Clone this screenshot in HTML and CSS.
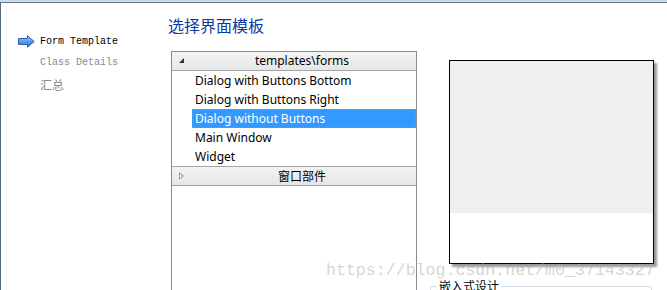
FILE: index.html
```html
<!DOCTYPE html>
<html lang="zh-CN">
<head>
    <meta charset="UTF-8">
    <title>新建窗体 - 选择界面模板</title>
    <link rel="stylesheet" href="styles.css">
</head>
<body>

    <div class="frame">
        <div class="frame-inner">

            <!-- Wizard steps -->
            <ul class="steps">
                <li class="step current">
                    <span class="step-mark">
                        <svg width="17" height="13" viewBox="0 0 17 13">
                            <defs>
                                <linearGradient id="arrowFill" x1="0" y1="0" x2="0" y2="1">
                                    <stop offset="0" stop-color="#a9d0ff"/>
                                    <stop offset="0.5" stop-color="#5b9bea"/>
                                    <stop offset="1" stop-color="#2f6fc9"/>
                                </linearGradient>
                            </defs>
                            <path d="M0.5 3.5 H9.5 V0.8 L16.2 6.5 L9.5 12.2 V9.5 H0.5 Z" fill="url(#arrowFill)" stroke="#2b5fae" stroke-width="1"/>
                        </svg>
                    </span>
                    Form Template
                </li>
                <li class="step"><span class="step-mark"></span>Class Details</li>
                <li class="step cjk"><span class="step-mark"></span>汇总</li>
            </ul>

            <!-- Page -->
            <div class="page">
                <h1 class="page-title">选择界面模板</h1>

                <div class="page-body">
                    <div class="tree">
                        <div class="tree-header">
                            <span class="tree-toggle open"></span>
                            templates\forms
                        </div>
                        <div class="tree-item">Dialog with Buttons Bottom</div>
                        <div class="tree-item">Dialog with Buttons Right</div>
                        <div class="tree-item selected">Dialog without Buttons</div>
                        <div class="tree-item">Main Window</div>
                        <div class="tree-item">Widget</div>
                        <div class="tree-header cjk">
                            <span class="tree-toggle closed"></span>
                            窗口部件
                        </div>
                    </div>

                    <div class="side">
                        <div class="preview">
                            <div class="preview-form"></div>
                        </div>
                        <fieldset class="group">
                            <legend>嵌入式设计</legend>
                        </fieldset>
                    </div>
                </div>
            </div>

        </div>
    </div>

    <div class="watermark">https://blog.csdn.net/m0_37143327</div>

</body>
</html>
```

FILE: styles.css
```css
/* Base */
body, html {
    margin: 0;
    padding: 0;
    width: 667px;
    height: 290px;
    overflow: hidden;
    background: #ffffff;
    font-family: 'Noto Sans', 'Noto Sans CJK SC', sans-serif;
    color: #000;
    position: relative;
}

/* Window frame */
.frame {
    height: 100%;
    border-top: 2px solid #c9dcf0;
    box-sizing: border-box;
}

.frame-inner {
    display: flex;
    height: 100%;
    border-top: 1px solid #6f7884;
    border-left: 1px solid #56687b;
    box-sizing: border-box;
}

/* Wizard steps */
.steps {
    list-style: none;
    margin: 0;
    padding: 31px 0 0 17px;
    width: 133px;
    flex-shrink: 0;
}

.step {
    display: flex;
    align-items: center;
    height: 18px;
    font-family: 'Liberation Mono', 'DejaVu Sans Mono', monospace;
    font-size: 10px;
    color: #8a8a8a;
    white-space: nowrap;
}

.step.current {
    height: 15px;
    margin-bottom: 4px;
    color: #000;
}

.step.cjk {
    font-family: 'Noto Sans CJK SC', sans-serif;
    font-size: 12px;
    height: 26px;
}

.step-mark {
    display: flex;
    width: 17px;
    margin-right: 5px;
}

/* Page */
.page {
    flex: 1;
    padding: 12px 0 0 17px;
}

.page-title {
    margin: 0;
    font-family: 'Noto Sans CJK SC', sans-serif;
    font-weight: normal;
    font-size: 16px;
    line-height: 20px;
    color: #0a3aa0;
}

.page-body {
    display: flex;
    margin-top: 16px;
    margin-left: 3px;
}

/* Template tree */
.tree {
    width: 246px;
    height: 239px;
    border: 1px solid #8b8b96;
    border-bottom: none;
    box-sizing: border-box;
    font-size: 12px;
    flex-shrink: 0;
}

.tree-header {
    position: relative;
    height: 18px;
    line-height: 18px;
    padding-left: 16px;
    text-align: center;
    background: linear-gradient(#f4f4f4, #e6e6e6);
    border-bottom: 1px solid #a3a3a8;
}

.tree-header.cjk {
    border-top: 1px solid #a3a3a8;
    font-family: 'Noto Sans CJK SC', sans-serif;
    font-size: 12px;
}

.tree-toggle {
    position: absolute;
    left: 7px;
    top: 6px;
    width: 0;
    height: 0;
}

.tree-toggle.open {
    border-left: 5px solid transparent;
    border-bottom: 5px solid #333;
}

.tree-toggle.closed {
    top: 5px;
    width: 5px;
    height: 8px;
}

.tree-toggle.closed::before {
    content: "";
    position: absolute;
    left: 0;
    top: 0;
    border-top: 4px solid transparent;
    border-bottom: 4px solid transparent;
    border-left: 5px solid #a0a0a0;
}

.tree-toggle.closed::after {
    content: "";
    position: absolute;
    left: 1px;
    top: 2px;
    border-top: 2px solid transparent;
    border-bottom: 2px solid transparent;
    border-left: 2.5px solid #fff;
}

.tree-item {
    height: 19px;
    line-height: 19px;
    margin-left: 20px;
    padding-left: 3px;
    white-space: nowrap;
}

.tree-item.selected {
    background: #3399ff;
    color: #fff;
    outline: 1px dotted #c38a3a;
    outline-offset: -1px;
}

/* Preview side */
.side {
    margin-left: 13px;
    display: flex;
    flex-direction: column;
}

.preview {
    width: 205px;
    height: 204px;
    margin: 9px 0 0 19px;
    border: 1px solid #000;
    box-sizing: border-box;
    background: #fff;
    box-shadow: 3px 3px 2px #9a9a9a;
}

.preview-form {
    height: 152px;
    background: #efefef;
}

.group {
    margin: 16px 0 0 0;
    padding: 0;
    width: 220px;
    height: 14px;
    border: 1px solid #d3dce4;
    border-bottom: none;
    border-radius: 4px 4px 0 0;
}

.group legend {
    margin-left: 6px;
    padding: 0 2px;
    font-family: 'Noto Sans CJK SC', sans-serif;
    font-size: 12px;
    line-height: 12px;
}

/* Watermark laid over the screen */
.watermark {
    position: absolute;
    left: 326px;
    top: 261px;
    font-family: 'Liberation Mono', monospace;
    font-size: 16.6px;
    line-height: 20px;
    color: rgba(170, 170, 170, 0.5);
    white-space: nowrap;
    pointer-events: none;
}
```
